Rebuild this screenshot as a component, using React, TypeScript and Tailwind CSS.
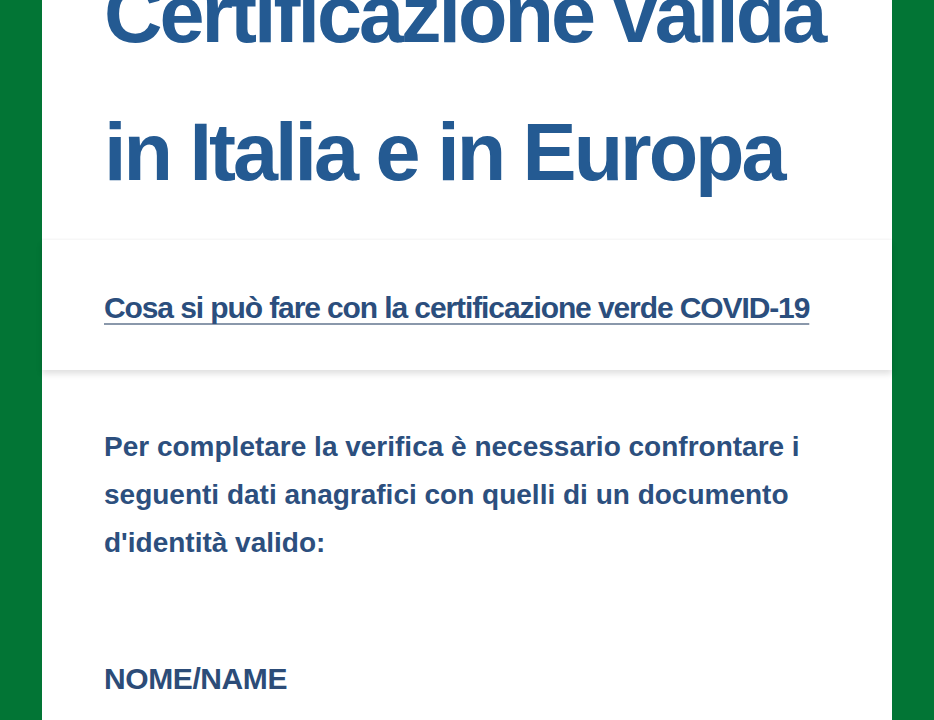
import React from 'react';

const font = { fontFamily: '"Liberation Sans", Arial, sans-serif' };

export default function App() {
  return (
    <div className="h-[720px] w-full overflow-hidden bg-[#027535]" style={font}>
      <div className="mx-[42px] h-full bg-white flex flex-col">
        {/* Title */}
        <section className="bg-white pl-[62px] pb-[19px]">
          <h1 className="-mt-[55px] whitespace-nowrap text-[81px] leading-[138px] font-bold tracking-[-3px] text-[#245a92]">
            Certificazione valida
            <br />
            in Italia e in Europa
          </h1>
        </section>

        {/* Link */}
        <section className="relative z-10 bg-white pl-[62px] pt-[48px] pb-[42px] shadow-[0_-1px_2px_rgba(0,0,0,0.04),0_4px_6px_rgba(0,0,0,0.12)]">
          <a
            href="#"
            className="block whitespace-nowrap text-[30px] leading-[40px] font-bold tracking-[-1.1px] text-[#2b4e7d] underline decoration-[#8a98ab] decoration-2 underline-offset-[5px] [text-decoration-skip-ink:none]"
          >
            Cosa si può fare con la certificazione verde COVID-19
          </a>
        </section>

        {/* Verification */}
        <section className="flex-1 bg-white pl-[62px] pr-[68px] pt-[53px]">
          <p className="text-[28px] leading-[48px] font-bold text-[#2c4f7e]">
            Per completare la verifica è necessario confrontare i seguenti dati anagrafici con quelli di un documento
            d'identità valido:
          </p>
          <div className="mt-[92px]">
            <h3 className="text-[30px] leading-[40px] font-bold tracking-[-0.4px] text-[#2c4c78]">NOME/NAME</h3>
          </div>
        </section>
      </div>
    </div>
  );
}
